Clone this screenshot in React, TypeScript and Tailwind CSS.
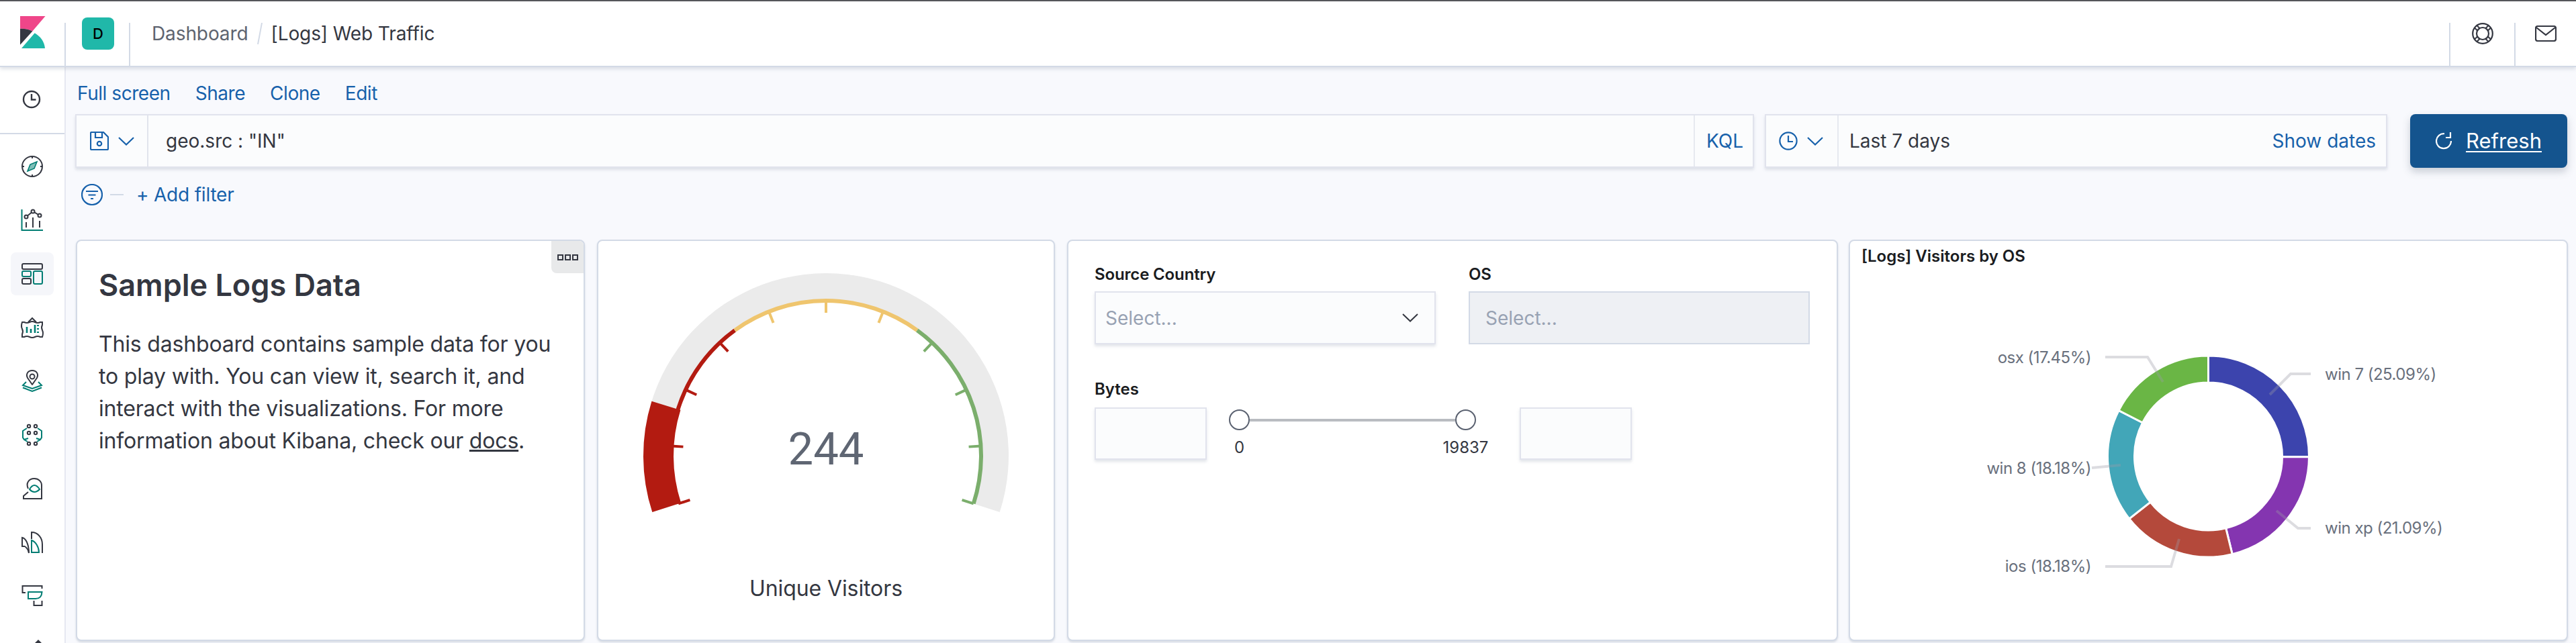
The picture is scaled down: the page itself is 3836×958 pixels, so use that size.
import React from "react";

const DARK = "#343741";
const TEAL = "#017d73";
const BLUE = "#1761ab";

function Ic({ y, children }: { y: number; children: React.ReactNode }) {
  return (
    <svg width={32} height={32} viewBox={`32 ${y} 32 32`} fill="none" strokeWidth={2} strokeLinejoin="miter" className="block overflow-visible">
      {children}
    </svg>
  );
}

function NavItem({ active, children }: { active?: boolean; children: React.ReactNode }) {
  return (
    <div className={"mx-[16px] my-[8px] flex h-[64px] w-[64px] shrink-0 items-center justify-center rounded-[8px] " + (active ? "bg-[#f5f6fa]" : "")}>
      {children}
    </div>
  );
}

function Sidebar() {
  return (
    <aside className="flex h-full w-[98px] shrink-0 flex-col overflow-hidden border-r-2 border-[#e6e8f1] bg-white">
      <div className="flex h-[100px] shrink-0 items-center justify-center border-b-2 border-[#d3dae6] pb-[2px] pr-[2px]">
        <svg width={28} height={28} viewBox="0 0 28 28" fill="none" stroke={DARK} strokeWidth={2.4} className="block">
          <circle cx={14} cy={14} r={12} />
          <path d="M14 6v8.5h6.5" />
        </svg>
      </div>
      <div className="flex flex-col pt-[8px]">
        <NavItem>
          <Ic y={232}>
            <circle cx={48} cy={248} r={15} stroke={DARK} />
            <path d="M48 233v3M48 260v3M33 248h3M60 248h3" stroke={DARK} />
            <path d="M55 241 L51 251 L41 255 L45 245 Z" stroke={TEAL} fill="#7fbfb8" strokeWidth={1.6} />
          </Ic>
        </NavItem>
        <NavItem>
          <Ic y={312}>
            <path d="M32.5 312V343H64" stroke={TEAL} />
            <path d="M39 323L49 315L59 321" stroke={DARK} />
            <circle cx={39} cy={323} r={2.5} stroke={DARK} fill="white" />
            <circle cx={49} cy={315} r={2.5} stroke={DARK} fill="white" />
            <circle cx={59} cy={321} r={2.5} stroke={DARK} fill="white" />
            <path d="M39 331v8M49 324v15M59 329v10" stroke={DARK} />
          </Ic>
        </NavItem>
        <NavItem active>
          <Ic y={392}>
            <rect x={33} y={393} width={30} height={8} rx={2} stroke={DARK} />
            <rect x={33} y={404} width={13} height={8} rx={2} stroke={TEAL} />
            <rect x={33} y={415} width={13} height={8} rx={2} stroke={DARK} />
            <rect x={50} y={404} width={13} height={19} rx={2} stroke={TEAL} />
          </Ic>
        </NavItem>
        <NavItem>
          <Ic y={472}>
            <path d="M42 480L48 474L54 480" stroke={DARK} />
            <path d="M33 480H36Q40 482 44 480T52 480T60 480H63V484Q61 488 63 492T63 502H60Q56 500 52 502T44 502T36 502H33V498Q35 494 33 490T33 480Z" stroke={DARK} />
            <path d="M40 487v9M46 490v6M52 484v12" stroke={TEAL} strokeWidth={2.6} />
            <path d="M55 485h3M55 490h3M55 495h3" stroke={TEAL} />
          </Ic>
        </NavItem>
        <NavItem>
          <Ic y={552}>
            <path d="M48 573L41 563C38 557 42 552 48 552C54 552 58 557 55 563Z" stroke={DARK} strokeLinejoin="round" />
            <circle cx={48} cy={561} r={3.5} stroke={DARK} />
            <path d="M39 569L34 574L48 579L62 574L57 569" stroke={TEAL} />
            <path d="M34 577.5L48 583L62 577.5" stroke={TEAL} />
          </Ic>
        </NavItem>
        <NavItem>
          <Ic y={632}>
            <g stroke={DARK}>
              <circle cx={43} cy={635} r={2.2} />
              <circle cx={53} cy={635} r={2.2} />
              <circle cx={43} cy={645} r={2.2} />
              <circle cx={53} cy={645} r={2.2} />
              <circle cx={43} cy={661} r={2.2} />
              <circle cx={53} cy={661} r={2.2} />
            </g>
            <path d="M40 638L34 642V652L36 655L41 658M36 655L42 653" stroke={TEAL} />
            <path d="M56 638L62 642V652L60 655L55 658M60 655L54 653" stroke={TEAL} />
          </Ic>
        </NavItem>
        <NavItem>
          <Ic y={712}>
            <path d="M42 728C38 720 43 713 51 713C58 713 62 718 62 723V743H35V739L42 733" stroke={DARK} />
            <path d="M44 729Q51 717 59 729Q51 737 44 729Z" stroke={TEAL} />
          </Ic>
        </NavItem>
        <NavItem>
          <Ic y={792}>
            <path d="M47 803V793C57 793 63 802 63 811V824" stroke={DARK} />
            <path d="M47 805C53 807 58 815 58 823H47Z" stroke={TEAL} />
            <path d="M43 824C43 812 39 802 33 801V814H37" stroke={DARK} />
            <path d="M37 814C40 816 42 819 43 824" stroke={DARK} />
          </Ic>
        </NavItem>
        <NavItem>
          <Ic y={872}>
            <path d="M38 883H33.5V873H62.5V877" stroke={DARK} />
            <path d="M42 882H62.5Q62 892 53 892H42Z" stroke={TEAL} />
            <path d="M50.5 895V902H62.5V895" stroke={DARK} />
          </Ic>
        </NavItem>
        <NavItem>
          <Ic y={952}>
            <path d="M57 953L50 960H64Z" fill={DARK} />
          </Ic>
        </NavItem>
      </div>
    </aside>
  );
}

function Divider() {
  return <div className="h-[64px] w-[2px] shrink-0 self-end bg-[#d3dae6]" />;
}

function Header() {
  return (
    <header className="relative z-10 flex h-[98px] shrink-0 items-start border-b-2 border-[#d3dae6] bg-white shadow-[0_3px_5px_rgba(152,162,179,0.3)]">
      <div className="flex h-full w-[96px] shrink-0 pl-[30px] pt-[22px]">
        <svg width={38} height={48} viewBox="30 24 38 48" className="block">
          <path d="M30 24H67.5L48.3 46.5C44 44 37 42.5 30 42.7Z" fill="#ef4689" />
          <path d="M30 42.7C37 42.5 44 44 48.3 46.5L30 66.8Z" fill="#343741" />
          <path d="M32 72L51.7 49.3C60 54 66 62 67 72Z" fill="#1fb8a9" />
        </svg>
      </div>
      <Divider />
      <div className="w-[94px] shrink-0 pl-[24px] pt-[24px]">
        <div className="flex h-[48px] w-[48px] items-center justify-center rounded-[8px] bg-[#20b8a9] text-[22px] font-medium text-black">D</div>
      </div>
      <Divider />
      <nav className="mt-[24px] flex h-[48px] min-w-0 flex-1 items-center pl-[32px] text-[28px] leading-[48px] tracking-[-0.1px]">
        <span className="text-[#5e6470]">Dashboard</span>
        <svg width={8} height={32} viewBox="0 0 8 32" className="mx-[13px] block">
          <path d="M7 0L1 32" stroke="#d3dae6" strokeWidth={2} />
        </svg>
        <span className="text-[#343741]">[Logs] Web Traffic</span>
      </nav>
      <Divider />
      <div className="mt-[24px] flex h-[48px] w-[95px] shrink-0 items-center justify-center">
        <svg width={32} height={32} viewBox="0 0 32 32" fill="none" stroke={DARK} strokeWidth={2.2} className="block">
          <circle cx={16} cy={16} r={14.8} />
          <circle cx={16} cy={16} r={9} />
          {[45, 135, 225, 315].map((a) => (
            <g key={a} transform={`rotate(${a} 16 16)`}>
              <path d="M13.6 1.5V7.5M18.4 1.5V7.5" strokeWidth={2} />
            </g>
          ))}
        </svg>
      </div>
      <Divider />
      <div className="mt-[24px] flex h-[48px] w-[90px] shrink-0 items-center justify-start pl-[29px]">
        <svg width={32} height={24} viewBox="0 0 32 24" fill="none" stroke={DARK} strokeWidth={2.2} className="block">
          <rect x={1} y={1} width={30} height={22} rx={3} />
          <path d="M2 3L16 14L30 3" />
        </svg>
      </div>
    </header>
  );
}

function Toolbar() {
  return (
    <div className="flex h-[70px] items-end gap-[37px] pb-[14px] pl-[3px] text-[28px] leading-[34px] tracking-[-0.45px] text-[#1761ab]">
      <span>Full screen</span>
      <span>Share</span>
      <span>Clone</span>
      <span>Edit</span>
    </div>
  );
}

const inputBox = "border-2 border-[#e1e3ed] bg-[#fbfcfd] shadow-[0_3px_4px_rgba(152,162,179,0.28)]";

function QueryRow() {
  return (
    <div className="flex h-[80px] items-stretch">
      <div className={"flex min-w-0 flex-1 items-stretch " + inputBox}>
        <div className="flex w-[107px] shrink-0 items-center gap-[14px] border-r-2 border-[#e1e4ec] pl-[20px]">
          <svg width={28} height={28} viewBox="0 0 28 28" fill="none" stroke={BLUE} strokeWidth={2.2} className="block">
            <path d="M2.5 1H20L27 8V25.5A1.5 1.5 0 0 1 25.5 27H2.5A1.5 1.5 0 0 1 1 25.5V2.5A1.5 1.5 0 0 1 2.5 1Z" />
            <path d="M8 1V9H18V1" />
            <circle cx={14} cy={18} r={3.2} />
          </svg>
          <svg width={24} height={13} viewBox="0 0 24 13" fill="none" stroke={BLUE} strokeWidth={2.2} className="block">
            <path d="M1 1L12 11.5L23 1" />
          </svg>
        </div>
        <div className="flex flex-1 items-center pl-[26px] text-[28px] text-[#343741]">geo.src : "IN"</div>
        <div className="flex w-[88px] shrink-0 items-center border-l-2 border-[#e6e9f0] pl-[17px] text-[28px] text-[#1761ab]">KQL</div>
      </div>
      <div className={"ml-[16px] flex w-[927px] shrink-0 items-stretch " + inputBox}>
        <div className="flex w-[108px] shrink-0 items-center gap-[14px] border-r-2 border-[#e6e9f0] pl-[19px]">
          <svg width={28} height={28} viewBox="0 0 28 28" fill="none" stroke={BLUE} strokeWidth={2.2} className="block">
            <circle cx={14} cy={14} r={12.6} />
            <path d="M14 6V15H21" />
          </svg>
          <svg width={24} height={13} viewBox="0 0 24 13" fill="none" stroke={BLUE} strokeWidth={2.2} className="block">
            <path d="M1 1L12 11.5L23 1" />
          </svg>
        </div>
        <div className="flex flex-1 items-center justify-between pl-[16px] pr-[15px] text-[28px] text-[#343741]">
          <span>Last 7 days</span>
          <span className="text-[#1761ab]">Show dates</span>
        </div>
      </div>
      <button className="ml-[34px] flex w-[234px] shrink-0 items-center justify-center gap-[21px] rounded-[8px] bg-[#14548e] text-[31px] text-white shadow-[0_6px_12px_rgba(65,78,101,0.25)]">
        <svg width={24} height={28} viewBox="0 0 24 28" fill="none" stroke="white" strokeWidth={2.2} className="block">
          <path d="M13 3.2A11 11 0 1 0 23 14" />
          <path d="M22 1V9H15" />
        </svg>
        <span className="underline decoration-2 underline-offset-[4px]">Refresh</span>
      </button>
    </div>
  );
}

function FilterRow() {
  return (
    <div className="flex h-[80px] items-center pl-[9px] text-[28px] tracking-[-0.2px] text-[#1761ab]">
      <svg width={32} height={32} viewBox="0 0 32 32" fill="none" stroke={BLUE} strokeWidth={2.2} className="block">
        <circle cx={16} cy={16} r={15} />
        <path d="M7 11H25M10.5 16.5H21.5M14 22H18" />
      </svg>
      <div className="ml-[11px] h-[2px] w-[20px] bg-[#d3dae6]" />
      <span className="ml-[19px]">+ Add filter</span>
    </div>
  );
}

const panel = "relative h-full shrink-0 overflow-hidden rounded-[8px] border-2 border-[#d3dae6] bg-white shadow-[0_2px_3px_rgba(152,162,179,0.35)]";

function pt(cx: number, cy: number, r: number, deg: number): [number, number] {
  const a = (deg * Math.PI) / 180;
  return [cx + r * Math.sin(a), cy - r * Math.cos(a)];
}

function arc(cx: number, cy: number, r: number, a0: number, a1: number) {
  const [x0, y0] = pt(cx, cy, r, a0);
  const [x1, y1] = pt(cx, cy, r, a1);
  return `M${x0} ${y0}A${r} ${r} 0 ${a1 - a0 > 180 ? 1 : 0} 1 ${x1} ${y1}`;
}

function band(cx: number, cy: number, ro: number, ri: number, a0: number, a1: number) {
  const [x0, y0] = pt(cx, cy, ro, a0);
  const [x1, y1] = pt(cx, cy, ro, a1);
  const [x2, y2] = pt(cx, cy, ri, a1);
  const [x3, y3] = pt(cx, cy, ri, a0);
  const l = a1 - a0 > 180 ? 1 : 0;
  return `M${x0} ${y0}A${ro} ${ro} 0 ${l} 1 ${x1} ${y1}L${x2} ${y2}A${ri} ${ri} 0 ${l} 0 ${x3} ${y3}Z`;
}

function Gauge() {
  const cx = 1230;
  const cy = 679;
  const ticks = Array.from({ length: 11 }, (_, i) => -108 + i * 21.6);
  const col = (a: number) => (a < -36 ? "#b31b11" : a > 36 ? "#7bae6c" : "#efc56e");
  return (
    <svg width={678} height={594} viewBox="891 359 678 594" className="block">
      <path d={band(cx, cy, 272, 232, -108, 108)} fill="#ebebeb" />
      <path d={arc(cx, cy, 231, -108, -36)} stroke="#b31b11" strokeWidth={6} fill="none" />
      <path d={arc(cx, cy, 231, -36, 36)} stroke="#efc56e" strokeWidth={6} fill="none" />
      <path d={arc(cx, cy, 231, 36, 108)} stroke="#7bae6c" strokeWidth={6} fill="none" />
      {ticks.map((a) => {
        const [x0, y0] = pt(cx, cy, 231, a);
        const [x1, y1] = pt(cx, cy, 213, a);
        return <line key={a} x1={x0} y1={y0} x2={x1} y2={y1} stroke={col(a)} strokeWidth={4} />;
      })}
      <path d={band(cx, cy, 272, 227, -108, -72.6)} fill="#b31b11" />
      <text x={cx} y={692} textAnchor="middle" fontSize={67} fill="#5f6673" fontFamily="Roboto, sans-serif">244</text>
      <text x={cx} y={888} textAnchor="middle" fontSize={32} letterSpacing={-0.1} fill="#343741" fontFamily="Inter, sans-serif">Unique Visitors</text>
    </svg>
  );
}

function Field({ label, disabled, chevron }: { label: string; disabled?: boolean; chevron?: boolean }) {
  return (
    <div className="w-[508px] shrink-0">
      <div className="mb-[11px] h-[28px] text-[24px] font-semibold leading-[28px] tracking-[-0.15px] text-[#1a1c21]">{label}</div>
      <div className={"flex h-[79px] items-center justify-between pr-[24px] text-[28px] text-[#98a2b3] " + (disabled ? "border-2 border-[#d3dae6] bg-[#eef0f4] pl-[23px]" : "pl-[14px] " + inputBox)}>
        <span>Select...</span>
        {chevron && (
          <svg width={24} height={13} viewBox="0 0 24 13" fill="none" stroke={DARK} strokeWidth={2} className="block">
            <path d="M1 1L12 11.5L23 1" />
          </svg>
        )}
      </div>
    </div>
  );
}

function Controls() {
  return (
    <div className="pl-[39px] pt-[36px]">
      <div className="flex gap-[49px]">
        <Field label="Source Country" chevron />
        <Field label="OS" disabled />
      </div>
      <div className="mb-[13px] mt-[53px] h-[28px] text-[24px] font-semibold leading-[28px] text-[#1a1c21]">Bytes</div>
      <div className="flex items-start">
        <div className={"h-[78px] w-[167px] shrink-0 " + inputBox} />
        <div className="ml-[33px] w-[368px] shrink-0 pt-[3px]">
          <div className="flex items-center">
            <div className="h-[31px] w-[31px] shrink-0 rounded-full border-2 border-[#5a6170] bg-white" />
            <div className="h-[4px] flex-1 bg-[#b9bcc1]" />
            <div className="h-[31px] w-[31px] shrink-0 rounded-full border-2 border-[#5a6170] bg-white" />
          </div>
          <div className="mt-[11px] flex justify-between text-[24px] leading-[30px] text-[#343741]">
            <span className="flex w-[31px] justify-center">0</span>
            <span className="flex w-[31px] justify-center">19837</span>
          </div>
        </div>
        <div className={"ml-[65px] h-[78px] w-[167px] shrink-0 " + inputBox} />
      </div>
    </div>
  );
}

function Donut() {
  const cx = 3288.5;
  const cy = 680;
  const data: [number, string][] = [
    [25.09, "#3c44ad"],
    [21.09, "#8435b0"],
    [18.19, "#b4493b"],
    [18.18, "#42a6b8"],
    [17.45, "#6ab645"],
  ];
  let a = 0;
  const slices = data.map(([v, c]) => {
    const a0 = a;
    a += (v / 100) * 360;
    return <path key={c} d={band(cx, cy, 150, 110, a0, a)} fill={c} stroke="white" strokeWidth={3} />;
  });
  const lines = [
    "M3441 557H3411L3380 588",
    "M3441 787H3422L3390 761",
    "M3135 532H3198L3221 569",
    "M3115 697L3158 693",
    "M3135 844H3233L3245 803",
  ];
  const labels: [number, number, "start" | "end", string][] = [
    [3462, 566, "start", "win 7 (25.09%)"],
    [3462, 795, "start", "win xp (21.09%)"],
    [3114, 541, "end", "osx (17.45%)"],
    [3114, 706, "end", "win 8 (18.18%)"],
    [3114, 852, "end", "ios (18.18%)"],
  ];
  return (
    <svg width={1067} height={548} viewBox="2755 405 1067 548" className="block">
      {slices}
      {lines.map((d) => (
        <path key={d} d={d} fill="none" stroke="#9a9ca5" strokeOpacity={0.35} strokeWidth={4} />
      ))}
      {labels.map(([x, y, anchor, t]) => (
        <text key={t} x={x} y={y} textAnchor={anchor} fontSize={24} letterSpacing={-0.5} fill="#69707d" fontFamily="Inter, sans-serif">{t}</text>
      ))}
    </svg>
  );
}

function Panels() {
  return (
    <div className="mt-[27px] flex h-[598px] pl-[1px]">
      <section className={panel + " w-[758px]"}>
        <div className="absolute right-0 top-0 flex h-[48px] w-[48px] items-center justify-center gap-[2px] rounded-bl-[8px] bg-[#e8e9ea]">
          <span className="h-[9px] w-[9px] border-2 border-[#343741]" />
          <span className="h-[9px] w-[9px] border-2 border-[#343741]" />
          <span className="h-[9px] w-[9px] border-2 border-[#343741]" />
        </div>
        <div className="pl-[32px] pt-[38px]">
          <h2 className="text-[45px] font-semibold leading-[56px] text-[#343741]">Sample Logs Data</h2>
          <p className="mt-[36px] text-[32px] leading-[48px] tracking-[-0.18px] text-[#343741]">
            This dashboard contains sample data for you
            <br />
            to play with. You can view it, search it, and
            <br />
            interact with the visualizations. For more
            <br />
            information about Kibana, check our <span className="underline">docs</span>.
          </p>
        </div>
      </section>
      <section className={panel + " ml-[18px] w-[682px]"}>
        <Gauge />
      </section>
      <section className={panel + " ml-[18px] w-[1148px]"}>
        <Controls />
      </section>
      <section className={panel + " ml-[16px] w-[1071px]"}>
        <div className="flex h-[46px] items-center pl-[17px] text-[24px] font-semibold text-[#1a1c21]">[Logs] Visitors by OS</div>
        <Donut />
      </section>
    </div>
  );
}

export default function App() {
  return (
    <div className="flex h-[958px] w-[3836px] flex-col overflow-hidden bg-white font-['Inter',sans-serif]">
      <div className="h-[2px] shrink-0 bg-[#55555a]" />
      <Header />
      <div className="flex min-h-0 flex-1">
        <Sidebar />
        <main className="min-w-0 flex-1 bg-[#f8f9fd] pl-[14px] pr-[13px]">
          <Toolbar />
          <QueryRow />
          <FilterRow />
          <Panels />
        </main>
      </div>
    </div>
  );
}
